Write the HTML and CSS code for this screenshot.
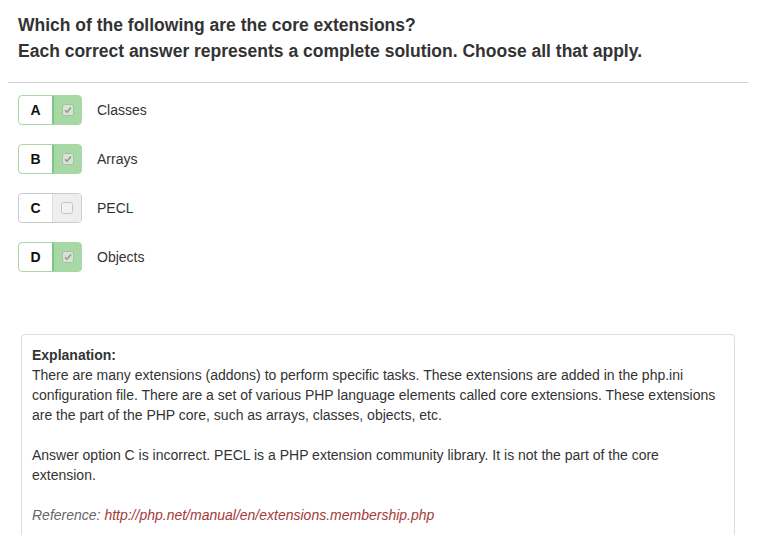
FILE: index.html
```html
<!DOCTYPE html>
<html>
<head>
<meta charset="utf-8">
<link rel="stylesheet" href="styles.css">
</head>
<body>
<div class="page">
  <div class="question">
    <p>Which of the following are the core extensions?</p>
    <p>Each correct answer represents a complete solution. Choose all that apply.</p>
  </div>
  <hr class="rule">
  <ul class="options">
    <li class="option">
      <span class="choice on"><span class="letter">A</span><span class="tick"><svg width="12" height="12" viewBox="0 0 12 12"><rect x="0.5" y="0.5" width="11" height="11" rx="2" fill="#d6e3d3" stroke="#a9bda6"/><path d="M3 6.2 L5 8.2 L9 3.6" fill="none" stroke="#8e9a8b" stroke-width="1.6"/></svg></span></span>
      <span class="label">Classes</span>
    </li>
    <li class="option">
      <span class="choice on"><span class="letter">B</span><span class="tick"><svg width="12" height="12" viewBox="0 0 12 12"><rect x="0.5" y="0.5" width="11" height="11" rx="2" fill="#d6e3d3" stroke="#a9bda6"/><path d="M3 6.2 L5 8.2 L9 3.6" fill="none" stroke="#8e9a8b" stroke-width="1.6"/></svg></span></span>
      <span class="label">Arrays</span>
    </li>
    <li class="option">
      <span class="choice"><span class="letter">C</span><span class="tick"><svg width="12" height="12" viewBox="0 0 12 12"><rect x="0.5" y="0.5" width="11" height="11" rx="2" fill="#f2f2f2" stroke="#c4c4c4"/></svg></span></span>
      <span class="label">PECL</span>
    </li>
    <li class="option">
      <span class="choice on"><span class="letter">D</span><span class="tick"><svg width="12" height="12" viewBox="0 0 12 12"><rect x="0.5" y="0.5" width="11" height="11" rx="2" fill="#d6e3d3" stroke="#a9bda6"/><path d="M3 6.2 L5 8.2 L9 3.6" fill="none" stroke="#8e9a8b" stroke-width="1.6"/></svg></span></span>
      <span class="label">Objects</span>
    </li>
  </ul>
  <div class="explain">
    <div class="title">Explanation:</div>
    <p>There are many extensions (addons) to perform specific tasks. These extensions are added in the php.ini configuration file. There are a set of various PHP language elements called core extensions. These extensions are the part of the PHP core, such as arrays, classes, objects, etc.</p>
    <p>Answer option C is incorrect. PECL is a PHP extension community library. It is not the part of the core extension.</p>
    <p class="ref">Reference: <a href="#">http://php.net/manual/en/extensions.membership.php</a></p>
  </div>
</div>
</body>
</html>
```

FILE: styles.css
```css
html, body {
  margin: 0;
  padding: 0;
  background: #fff;
}
body {
  font-family: "Liberation Sans", Arial, sans-serif;
  color: #333;
}
.page {
  padding: 0 9px 0 8px;
}
.question {
  padding: 12px 0 0 10px;
}
.question p {
  margin: 0;
  font-size: 17.5px;
  line-height: 26px;
  font-weight: bold;
  color: #333;
}
.rule {
  margin: 18px 0 0 0;
  border: 0;
  border-top: 1px solid #cfcfcf;
  height: 0;
}
.options {
  list-style: none;
  margin: 12px 0 0 0;
  padding: 0 0 0 10px;
  display: flex;
  flex-direction: column;
  gap: 19px;
}
.option {
  display: flex;
  align-items: center;
  gap: 15px;
  height: 30px;
}
.choice {
  display: flex;
  width: 64px;
  height: 30px;
  box-sizing: border-box;
  border: 1px solid #ccc;
  border-radius: 4px;
  overflow: hidden;
  background: #fff;
}
.letter {
  width: 33px;
  display: flex;
  align-items: center;
  justify-content: center;
  font-weight: bold;
  font-size: 14px;
  color: #111;
  border-right: 1px solid #ddd;
}
.tick {
  flex: 1;
  display: flex;
  align-items: center;
  justify-content: center;
  background: #eeeeee;
}
.tick svg {
  display: block;
}
.choice.on {
  border-color: #a9d6a7;
}
.choice.on .letter {
  border-right-color: #86c785;
}
.choice.on .tick {
  background: #a6d9a4;
  margin: -1px -1px -1px 0;
  border: 1px solid #7cc27b;
  border-radius: 0 4px 4px 0;
}
.label {
  font-size: 14px;
  color: #333;
}
.explain {
  margin: 62px 13px 0 13px;
  border: 1px solid #ddd;
  border-radius: 4px;
  padding: 10px 10px 12px 10px;
  font-size: 14px;
  line-height: 20px;
  color: #333;
}
.explain .title {
  font-weight: bold;
}
.explain p {
  margin: 0 0 20px 0;
}
.explain p.ref {
  margin: 0;
  font-style: italic;
  color: #666;
}
.explain .ref a {
  color: #a33a38;
  text-decoration: none;
}
```
